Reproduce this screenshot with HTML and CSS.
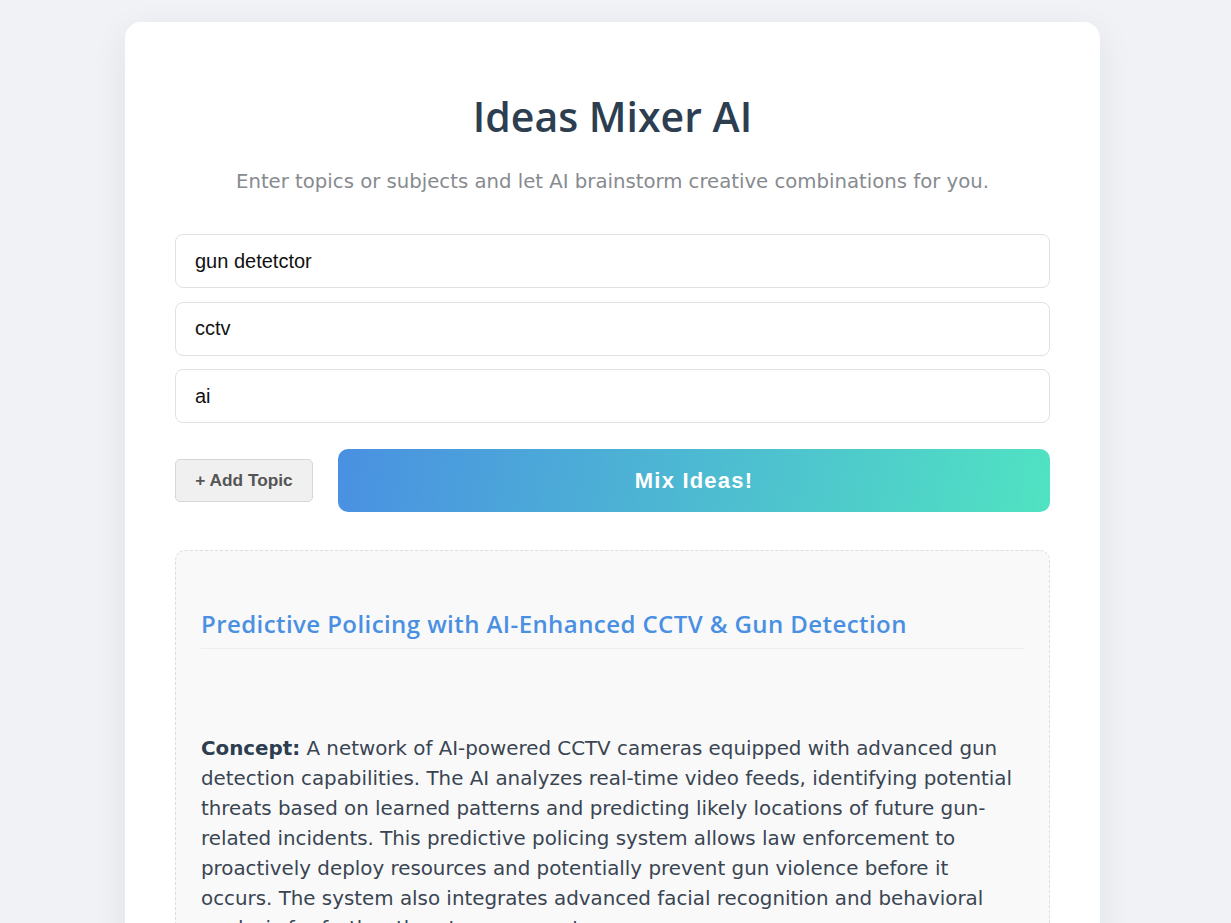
FILE: index.html
```html
<!DOCTYPE html>
<html lang="en">
<head>
<meta charset="utf-8">
<title>Ideas Mixer AI</title>
<link rel="stylesheet" href="styles.css">
</head>
<body>
<main class="card">
  <h1 class="title">Ideas Mixer AI</h1>
  <p class="subtitle">Enter topics or subjects and let AI brainstorm creative combinations for you.</p>
  <div class="topics">
    <input class="topic-input" type="text" value="gun detetctor">
    <input class="topic-input" type="text" value="cctv">
    <input class="topic-input" type="text" value="ai">
  </div>
  <div class="actions">
    <button class="btn-add" type="button">+ Add Topic</button>
    <button class="btn-mix" type="button">Mix Ideas!</button>
  </div>
  <section class="results">
    <h3 class="idea-title">Predictive Policing with AI-Enhanced CCTV &amp; Gun Detection</h3>
    <p class="idea-text"><strong>Concept:</strong> A network of AI-powered CCTV cameras equipped with advanced gun detection capabilities. The AI analyzes real-time video feeds, identifying potential threats based on learned patterns and predicting likely locations of future gun-related incidents. This predictive policing system allows law enforcement to proactively deploy resources and potentially prevent gun violence before it occurs. The system also integrates advanced facial recognition and behavioral analysis for further threat assessment.</p>
  </section>
</main>
</body>
</html>
```
FILE: styles.css
```css
* { box-sizing: border-box; }

html, body {
  margin: 0;
  background: #f0f2f5;
}

body {
  padding: 22px 6px 40px 0;
  font-family: "Open Sans", "Liberation Sans", sans-serif;
}

.card {
  width: 975px;
  margin: 0 auto;
  background: #ffffff;
  border-radius: 16px;
  box-shadow: 0 10px 35px rgba(30, 40, 70, 0.08);
  padding: 70px 50px 50px;
}

.title {
  margin: 0;
  font-size: 41px;
  line-height: 48px;
  font-weight: 600;
  color: #2c3e50;
  text-align: center;
}

.subtitle {
  margin: 28px 0 0;
  font-family: "DejaVu Sans", "Open Sans", sans-serif;
  font-size: 19.7px;
  line-height: 27px;
  color: #878b8f;
  text-align: center;
}

.topics {
  margin-top: 39px;
  display: flex;
  flex-direction: column;
  gap: 13.5px;
}

.topic-input {
  display: block;
  width: 100%;
  height: 54px;
  padding: 0 19px;
  border: 1px solid #dfe1e6;
  border-radius: 8px;
  background: #fff;
  font-family: "Liberation Sans", Arial, sans-serif;
  font-size: 20px;
  color: #111;
  outline: none;
}

.actions {
  margin-top: 26px;
  display: flex;
  align-items: center;
  gap: 25px;
}

.btn-add {
  flex: 0 0 138px;
  height: 43px;
  border: 1px solid #d6d6d6;
  border-radius: 5px;
  background: #f0f0f0;
  color: #555;
  font-family: "Liberation Sans", Arial, sans-serif;
  font-weight: 700;
  font-size: 17.3px;
  padding: 0;
}

.btn-mix {
  flex: 1;
  height: 63px;
  border: none;
  border-radius: 10px;
  background: linear-gradient(100deg, #4a90e2 0%, #50e3c2 100%);
  color: #fff;
  font-family: "Liberation Sans", Arial, sans-serif;
  font-weight: 700;
  font-size: 22px;
  letter-spacing: 1.2px;
  padding: 0;
}

.results {
  margin-top: 38px;
  background: #f9f9fa;
  border: 1px dashed #dcdde0;
  border-radius: 10px;
  padding: 55px 25px 40px;
}

.idea-title {
  margin: 0;
  font-size: 24px;
  letter-spacing: 0.42px;
  line-height: 36px;
  font-weight: 600;
  color: #4a90e2;
  padding-bottom: 6px;
  border-bottom: 1px solid #eceef3;
}

.idea-text {
  margin: 85px 0 0;
  padding-right: 4px;
  font-family: "DejaVu Sans", "Open Sans", sans-serif;
  font-size: 19.85px;
  line-height: 30px;
  color: #3a4552;
}

.idea-text strong {
  color: #2c3e50;
  font-weight: 700;
}
```
